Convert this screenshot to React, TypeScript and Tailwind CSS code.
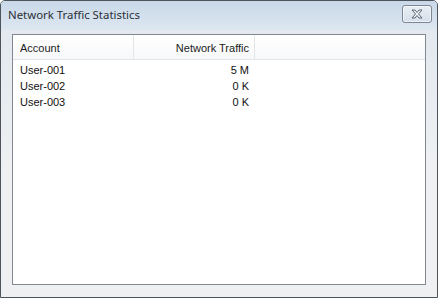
import React from "react";

const rows = [
  { account: "User-001", traffic: "5 M" },
  { account: "User-002", traffic: "0 K" },
  { account: "User-003", traffic: "0 K" },
];

const CloseButton: React.FC = () => (
  <div className="w-[30px] h-[18px] rounded-[3px] border border-[#7b8796] bg-gradient-to-b from-[#e9eff5] to-[#d5dfea] flex items-center justify-center shadow-[inset_0_0_0_1px_rgba(255,255,255,0.6)]">
    <svg width="14" height="10" viewBox="0 0 14 10">
      <path
        d="M2 1 L5 1 L7 3.5 L9 1 L12 1 L8.5 5 L12 9 L9 9 L7 6.5 L5 9 L2 9 L5.5 5 Z"
        fill="#f4f6f8"
        stroke="#5a6675"
        strokeWidth="1"
        strokeLinejoin="round"
      />
    </svg>
  </div>
);

const App: React.FC = () => {
  return (
    <div className="w-[438px] h-[298px] flex flex-col border border-[#4e545b] rounded-t-[5px] bg-[#eef0f2] overflow-hidden font-['Liberation_Sans',Arial,sans-serif]">
      {/* Title bar */}
      <div className="h-[29px] flex items-center justify-between pl-[7px] pr-[5px] bg-gradient-to-b from-[#c9d8e8] to-[#dde7f1]">
        <span className="text-[11.4px] text-[#2a2f36] font-['Noto_Sans','Open_Sans',sans-serif] -mt-[1px]">
          Network Traffic Statistics
        </span>
        <div className="-mt-[4px]">
          <CloseButton />
        </div>
      </div>

      {/* Body */}
      <div className="flex-1 flex flex-col pt-[4px] pl-[11px] pr-[11px] pb-[12px] bg-gradient-to-b from-[#e3e9ef] via-[#eef0f2] to-[#eef0f2]">
        <div className="flex-1 border border-[#828790] bg-white">
          {/* Header */}
          <div className="flex h-[25px] border-b border-[#e3e5e8] bg-gradient-to-b from-white to-[#f7f8f9] text-[11px] text-[#1c1c1c]">
            <div className="w-[121px] flex items-center pt-[2px] pl-[7px] border-r border-[#e3e5e8]">Account</div>
            <div className="w-[121px] flex items-center justify-end pt-[2px] pr-[5px] border-r border-[#e3e5e8]">
              Network Traffic
            </div>
          </div>

          {/* Rows */}
          <div className="pt-[2px]">
            {rows.map((r) => (
              <div key={r.account} className="flex h-[16px] items-center text-[11px] text-[#111]">
                <div className="w-[121px] pl-[7px]">{r.account}</div>
                <div className="w-[121px] text-right pr-[6px]">{r.traffic}</div>
              </div>
            ))}
          </div>
        </div>
      </div>
    </div>
  );
};

export default App;
